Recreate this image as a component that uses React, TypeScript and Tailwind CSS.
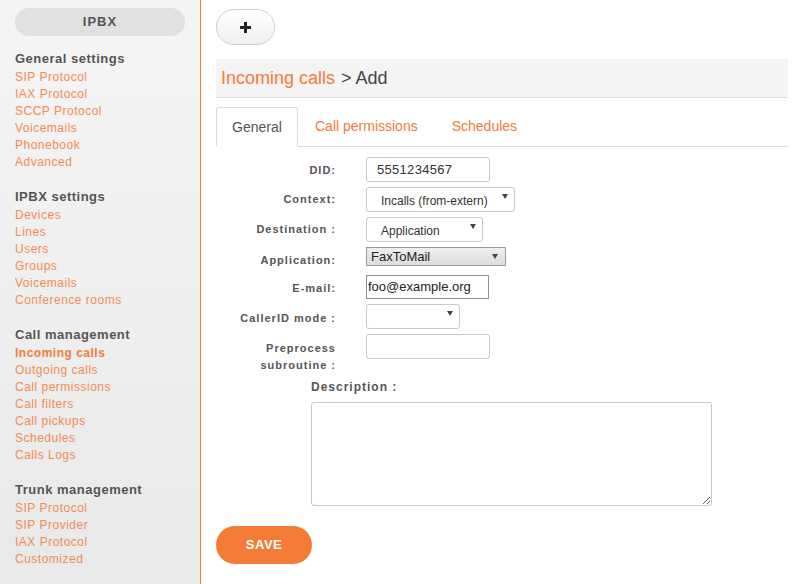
import * as React from "react";

type NavSection = {
  title: string;
  links: string[];
  active?: string;
};

const sections: NavSection[] = [
  {
    title: "General settings",
    links: ["SIP Protocol", "IAX Protocol", "SCCP Protocol", "Voicemails", "Phonebook", "Advanced"],
  },
  {
    title: "IPBX settings",
    links: ["Devices", "Lines", "Users", "Groups", "Voicemails", "Conference rooms"],
  },
  {
    title: "Call management",
    links: [
      "Incoming calls",
      "Outgoing calls",
      "Call permissions",
      "Call filters",
      "Call pickups",
      "Schedules",
      "Calls Logs",
    ],
    active: "Incoming calls",
  },
  {
    title: "Trunk management",
    links: ["SIP Protocol", "SIP Provider", "IAX Protocol", "Customized"],
  },
];

function Sidebar() {
  return (
    <aside className="w-[201px] shrink-0 border-r border-[#f47b36] bg-gradient-to-b from-[#f5f5f5] to-[#e9e9e9] px-[15px] pt-[8px]">
      <div className="flex h-[28px] items-center justify-center rounded-full bg-[#e1e1e1] text-[13px] font-bold tracking-[1px] text-[#555]">
        IPBX
      </div>
      <div className="mt-[14px] flex flex-col gap-[17px]">
        {sections.map((section) => (
          <div key={section.title}>
            <div className="mb-[1px] h-[18px] text-[13px] font-bold leading-[18px] tracking-[0.5px] text-[#555]">
              {section.title}
            </div>
            <ul>
              {section.links.map((link) => (
                <li
                  key={link}
                  className={
                    link === section.active
                      ? "h-[17px] text-[12px] font-bold leading-[17px] tracking-[0.5px] text-[#f47b36]"
                      : "h-[17px] text-[12px] leading-[17px] tracking-[0.5px] text-[#f58a4e]"
                  }
                >
                  {link}
                </li>
              ))}
            </ul>
          </div>
        ))}
      </div>
    </aside>
  );
}

function Arrow() {
  return (
    <svg width="6" height="5" viewBox="0 0 6 5" className="block">
      <path d="M0 0h6L3 5z" fill="#444" />
    </svg>
  );
}

function FieldLabel({ children, offset = "pt-[5px]" }: { children: React.ReactNode; offset?: string }) {
  return (
    <div
      className={`w-[120px] shrink-0 text-right text-[11px] font-bold leading-[17px] tracking-[1px] text-[#555] ${offset}`}
    >
      {children}
    </div>
  );
}

function TextBox({ value, width }: { value?: string; width: string }) {
  return (
    <div
      className={`flex h-[25px] items-center rounded-[3px] border border-[#c8c8c8] bg-white pl-[10px] text-[13px] tracking-[0.3px] text-[#333] ${width}`}
    >
      {value}
    </div>
  );
}

function SelectBox({ value, width }: { value?: string; width: string }) {
  return (
    <div
      className={`flex h-[25px] justify-between rounded-[3px] border border-[#c8c8c8] bg-white pl-[14px] pr-[6px] ${width}`}
    >
      <span className="pt-[6px] text-[12px] leading-[14px] text-[#333]">{value}</span>
      <span className="pt-[6px]">
        <Arrow />
      </span>
    </div>
  );
}

function Row({
  label,
  children,
  height = "h-[25px]",
  offset,
}: {
  label: React.ReactNode;
  children: React.ReactNode;
  height?: string;
  offset?: string;
}) {
  return (
    <div className={`flex items-start ${height}`}>
      <FieldLabel offset={offset}>{label}</FieldLabel>
      <div className="ml-[30px]">{children}</div>
    </div>
  );
}

export default function App() {
  return (
    <div className="flex h-[584px] w-[798px] overflow-hidden bg-white font-['Liberation_Sans',Arial,sans-serif]">
      <Sidebar />
      <main className="flex-1 pl-[15px] pr-[10px] pt-[9px]">
        <button className="flex h-[36px] w-[59px] items-center justify-center rounded-full border border-[#cfcfcf] bg-gradient-to-b from-white to-[#f0f0f0]">
          <svg width="11" height="11" viewBox="0 0 11 11">
            <path d="M4 0h3v4h4v3H7v4H4V7H0V4h4z" fill="#222" />
          </svg>
        </button>

        <div className="mt-[14px] flex h-[39px] items-center border-b border-[#dcdcdc] bg-[#f4f4f4] pl-[5px] text-[18px]">
          <span className="text-[#f47b36]">Incoming calls</span>
          <span className="ml-[6px] text-[#444]">&gt; Add</span>
        </div>

        <div className="mt-[9px] flex h-[40px] items-end border-b border-[#dcdcdc] text-[14px]">
          <div className="-mb-px flex h-[40px] w-[82px] items-center justify-center rounded-t-[3px] border border-b-white border-[#dcdcdc] bg-white text-[#555]">
            General
          </div>
          <div className="flex h-[40px] items-center px-[17px] text-[#f47b36]">Call permissions</div>
          <div className="flex h-[40px] items-center pl-[17px] text-[#f47b36]">Schedules</div>
        </div>

        <div className="mt-[10px] flex flex-col gap-[5px]">
          <Row label="DID:">
            <TextBox value="5551234567" width="w-[124px]" />
          </Row>
          <Row label="Context:" offset="pt-[4px]">
            <SelectBox value="Incalls (from-extern)" width="w-[149px]" />
          </Row>
          <Row label="Destination :" offset="pt-[4px]">
            <SelectBox value="Application" width="w-[117px]" />
          </Row>
          <Row label="Application:" height="h-[23px]" offset="pt-[5px]">
            <div className="flex h-[19px] w-[140px] items-center justify-between border border-[#9a9a9a] bg-gradient-to-b from-[#efefef] to-[#dcdcdc] pl-[4px] pr-[7px] text-[13px] text-[#222]">
              <span>FaxToMail</span>
              <Arrow />
            </div>
          </Row>
          <Row label="E-mail:" height="h-[24px]" offset="pt-[5px]">
            <div className="flex h-[24px] w-[123px] items-center border border-[#8f8f8f] pl-[1px] text-[13px] text-[#222]">
              foo@example.org
            </div>
          </Row>
          <Row label="CallerID mode :" offset="pt-[6px]">
            <SelectBox width="w-[94px]" />
          </Row>
          <Row label={<>Preprocess<br />subroutine :</>} height="h-[40px]" offset="pt-[6px]">
            <TextBox width="w-[124px]" />
          </Row>
        </div>

        <div className="ml-[95px] mt-[5px]">
          <div className="text-[12px] font-bold leading-[17px] tracking-[1px] text-[#555]">Description :</div>
          <textarea className="mt-[6px] block h-[104px] w-[401px] rounded-[3px] border border-[#c8c8c8] outline-none" />
        </div>

        <button className="mt-[20px] flex h-[38px] w-[96px] items-center justify-center rounded-full bg-[#f47b36] text-[13px] font-bold tracking-[0.5px] text-white">
          SAVE
        </button>
      </main>
    </div>
  );
}
